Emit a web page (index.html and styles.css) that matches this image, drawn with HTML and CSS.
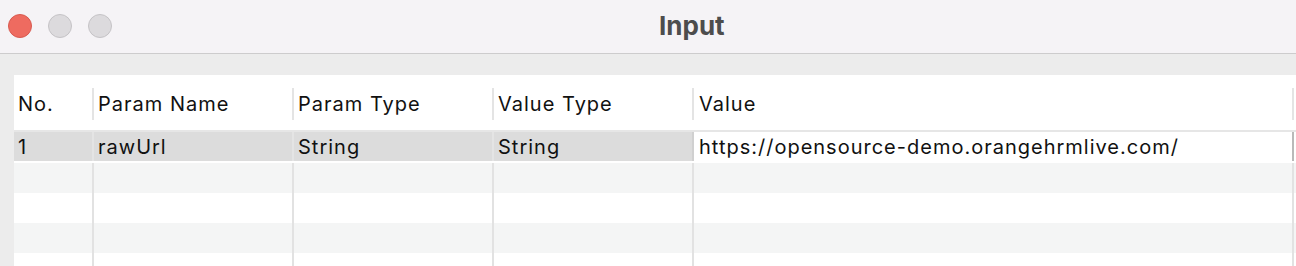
FILE: index.html
```html
<!DOCTYPE html>
<html>
<head>
<meta charset="utf-8">
<link rel="stylesheet" href="styles.css">
</head>
<body>
<div class="window">
  <div class="titlebar">
    <div class="lights">
      <span class="light red"></span>
      <span class="light gray"></span>
      <span class="light gray"></span>
    </div>
    <div class="title">Input</div>
  </div>
  <div class="content">
    <div class="table">
      <div class="row head">
        <div class="cell c1">No.</div>
        <div class="cell c2">Param Name</div>
        <div class="cell c3">Param Type</div>
        <div class="cell c4">Value Type</div>
        <div class="cell c5">Value</div>
        <div class="cell c6"></div>
      </div>
      <div class="row sel">
        <div class="cell c1">1</div>
        <div class="cell c2">rawUrl</div>
        <div class="cell c3">String</div>
        <div class="cell c4">String</div>
        <div class="cell c5 edit">https://opensource-demo.orangehrmlive.com/</div>
        <div class="cell c6"></div>
      </div>
      <div class="row alt">
        <div class="cell c1"></div><div class="cell c2"></div><div class="cell c3"></div><div class="cell c4"></div><div class="cell c5"></div><div class="cell c6"></div>
      </div>
      <div class="row">
        <div class="cell c1"></div><div class="cell c2"></div><div class="cell c3"></div><div class="cell c4"></div><div class="cell c5"></div><div class="cell c6"></div>
      </div>
      <div class="row alt">
        <div class="cell c1"></div><div class="cell c2"></div><div class="cell c3"></div><div class="cell c4"></div><div class="cell c5"></div><div class="cell c6"></div>
      </div>
      <div class="row">
        <div class="cell c1"></div><div class="cell c2"></div><div class="cell c3"></div><div class="cell c4"></div><div class="cell c5"></div><div class="cell c6"></div>
      </div>
    </div>
  </div>
</div>
</body>
</html>
```

FILE: styles.css
```css
html, body {
  margin: 0;
  padding: 0;
  width: 1296px;
  height: 266px;
  overflow: hidden;
  background: #ececec;
  font-family: Inter, "Liberation Sans", sans-serif;
}

.window {
  width: 1296px;
  height: 266px;
  display: flex;
  flex-direction: column;
}

.titlebar {
  height: 53px;
  flex: none;
  background: #f5f3f6;
  border-bottom: 1px solid #cdcccd;
  display: flex;
  align-items: center;
}

.lights {
  display: flex;
  gap: 16px;
  padding-left: 8px;
  margin-top: -1px;
}

.light {
  box-sizing: border-box;
  width: 24px;
  height: 24px;
  border-radius: 50%;
}

.red {
  background: #ee6b60;
  border: 1px solid #d85a50;
}

.gray {
  background: #dcdadd;
  border: 1px solid #c5c3c6;
}

.title {
  margin-left: 547px;
  font-size: 26px;
  font-weight: 700;
  color: #4d4d4d;
  margin-top: -2px;
}

.content {
  flex: 1;
  padding: 21px 0 0 14px;
  overflow: hidden;
}

.table {
  background: #fff;
  width: 1320px;
  height: 200px;
  font-size: 20px;
  letter-spacing: 1px;
  color: #111;
}

.row {
  display: flex;
  height: 30px;
}

.row.head {
  height: 55px;
  border-bottom: 2px solid #e6e6e6;
}

.row.sel {
  height: 29px;
  border-bottom: 2px solid #fff;
}

.row.alt {
  background: #f4f5f5;
}

.cell {
  box-sizing: border-box;
  flex: none;
  display: flex;
  align-items: center;
  padding-left: 4px;
  border-left: 2px solid #e2e2e2;
  white-space: nowrap;
}

.c1 { width: 78px; border-left: none; padding-left: 4px; }
.c2 { width: 200px; }
.c3 { width: 200px; }
.c4 { width: 200px; }
.c5 { width: 600px; padding-left: 5px; }
.c6 { width: 42px; }

.head .cell {
  border-left: none;
  padding-left: 6px;
  padding-top: 3px;
  background: linear-gradient(#e4e4e4, #e4e4e4) left 13px / 2px 32px no-repeat;
}

.head .c1 {
  background: none;
  padding-left: 4px;
}

.head .c5 { padding-left: 7px; }

.sel .cell {
  background: #dcdcdc;
  border-left-color: #e4e4e4;
  padding-top: 1px;
}

.sel .c5.edit {
  background: #fff;
  border-left-color: #d0d0d0;
}

.sel .c6 {
  background: #fff;
  border-left-color: #b9b9b9;
}
```
